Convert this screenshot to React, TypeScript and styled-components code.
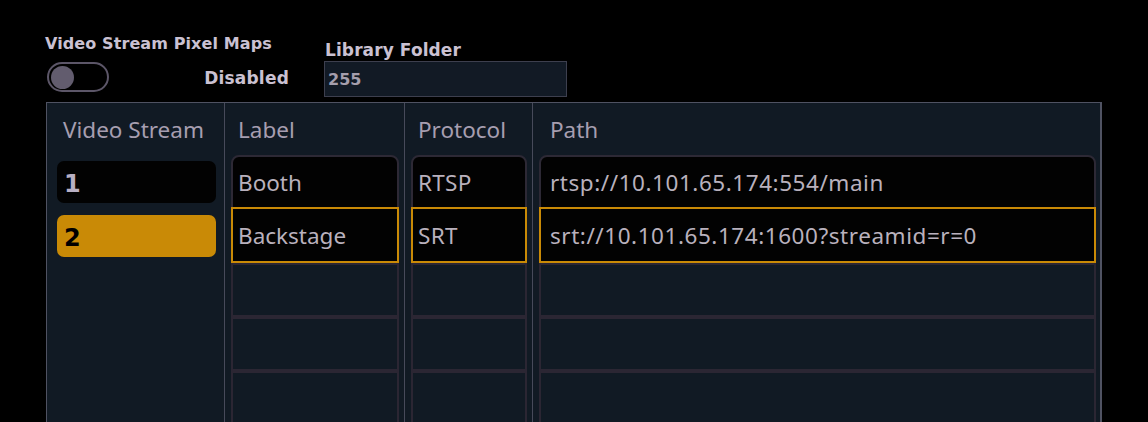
import React from "react";
import styled, { createGlobalStyle, css } from "styled-components";

const GlobalStyle = createGlobalStyle`
  html, body { margin: 0; padding: 0; background: #000; }
  body { font-family: "Noto Sans", "Open Sans", sans-serif; overflow: hidden; }
`;

const Page = styled.div`
  padding: 34px 0 0 46px;
  width: 1148px;
  height: 422px;
  box-sizing: border-box;
  overflow: hidden;
`;

const TopBar = styled.div`
  display: flex;
  align-items: flex-start;
`;

const ToggleGroup = styled.div`
  display: flex;
  flex-direction: column;
  width: 243px;
`;

const BoldLabel = styled.div<{ $size: number }>`
  font-family: "DejaVu Sans", sans-serif;
  font-weight: 700;
  font-size: ${(p) => p.$size}px;
  line-height: 19px;
  color: #cac1d2;
  white-space: nowrap;
`;

const Title = styled(BoldLabel)`
  margin-left: -1px;
  margin-bottom: 9px;
  letter-spacing: 0.1px;
`;

const ToggleRow = styled.div`
  display: flex;
  align-items: center;
  justify-content: space-between;
  height: 30px;
`;

const Toggle = styled.div`
  width: 62px;
  height: 30px;
  box-sizing: border-box;
  margin-left: 1px;
  border: 2px solid #5c5668;
  border-radius: 15px;
  display: flex;
  align-items: center;
  padding-left: 2px;
`;

const Knob = styled.div`
  width: 23px;
  height: 23px;
  border-radius: 50%;
  background: #625c6e;
`;

const Status = styled(BoldLabel)`
  margin-top: 2px;
  letter-spacing: 0.2px;
`;

const FolderGroup = styled.div`
  display: flex;
  flex-direction: column;
  margin-left: 35px;
  margin-top: 6px;
`;

const FolderTitle = styled(BoldLabel)`
  line-height: 20px;
  margin-left: 1px;
  margin-bottom: 1px;
  letter-spacing: 0.1px;
`;

const FolderInput = styled.div`
  width: 243px;
  height: 36px;
  box-sizing: border-box;
  border: 1px solid #3d3f4e;
  background: #121a25;
  display: flex;
  align-items: center;
  padding-left: 3px;
  font-family: "DejaVu Sans", sans-serif;
  font-weight: 700;
  font-size: 16px;
  color: #a59eac;
`;

const Panel = styled.div`
  margin-top: 5px;
  width: 1056px;
  height: 340px;
  box-sizing: border-box;
  border-top: 1px solid #4f5262;
  border-left: 1px solid #4f5262;
  border-right: 2px solid #4f5262;
  background: #111a24;
  display: grid;
  grid-template-columns: 178px 180px 128px 567px;
`;

const Column = styled.div<{ $divider?: number; $pad: string }>`
  display: flex;
  flex-direction: column;
  box-sizing: border-box;
  border-right: ${(p) => (p.$divider ? `${p.$divider}px solid #474a5a` : "none")};
  padding: ${(p) => p.$pad};
`;

const Header = styled.div<{ $indent: number }>`
  height: 52px;
  display: flex;
  align-items: center;
  padding-left: ${(p) => p.$indent}px;
  font-size: 22.5px;
  color: #a69eb0;
  white-space: nowrap;
`;

const StreamButton = styled.div<{ $active?: boolean }>`
  height: 42px;
  margin: 6px 0;
  border-radius: 7px;
  box-sizing: border-box;
  display: flex;
  align-items: center;
  padding: 3px 0 0 7px;
  font-family: "DejaVu Sans", sans-serif;
  font-weight: 700;
  font-size: 24px;
  background: ${(p) => (p.$active ? "#c98a06" : "#020202")};
  color: ${(p) => (p.$active ? "#000" : "#b8b0c4")};
`;

const Cell = styled.div<{ $kind: "first" | "selected" | "empty"; $inset: number; $spacing: number }>`
  position: relative;
  height: 54px;
  box-sizing: border-box;
  display: flex;
  align-items: center;
  padding-left: ${(p) => p.$inset}px;
  font-size: 22.5px;
  letter-spacing: ${(p) => p.$spacing}px;
  color: #b9b1bd;
  white-space: nowrap;
  border: 2px solid #2b2633;
  ${(p) =>
    p.$kind === "first" &&
    css`
      background: #020202;
      border-color: #2d2935;
      border-radius: 8px 8px 0 0;
    `}
  ${(p) =>
    p.$kind === "selected" &&
    css`
      background: #020202;
      border-color: #c98a06;
      height: 56px;
      margin-top: -2px;
      z-index: 1;
    `}
  ${(p) =>
    p.$kind === "empty" &&
    css`
      background: transparent;
    `}
`;

type Col = {
  title: string;
  indent: number;
  inset: number;
  spacing: number;
  pad: string;
  values: string[];
  divider?: number;
};

const columns: Col[] = [
  { title: "Label", indent: 7, inset: 5, spacing: 0, pad: "0 5px 0 6px", values: ["Booth", "Backstage"], divider: 1 },
  { title: "Protocol", indent: 7, inset: 5, spacing: 0.3, pad: "0 5px 0 6px", values: ["RTSP", "SRT"], divider: 1 },
  {
    title: "Path",
    indent: 11,
    inset: 9,
    spacing: 0.55,
    pad: "0 4px 0 6px",
    values: ["rtsp://10.101.65.174:554/main", "srt://10.101.65.174:1600?streamid=r=0"],
  },
];

const EMPTY_ROWS = 3;

export default function App() {
  return (
    <>
      <GlobalStyle />
      <Page>
        <TopBar>
          <ToggleGroup>
            <Title $size={16}>Video Stream Pixel Maps</Title>
            <ToggleRow>
              <Toggle>
                <Knob />
              </Toggle>
              <Status $size={17}>Disabled</Status>
            </ToggleRow>
          </ToggleGroup>
          <FolderGroup>
            <FolderTitle $size={17}>Library Folder</FolderTitle>
            <FolderInput>255</FolderInput>
          </FolderGroup>
        </TopBar>
        <Panel>
          <Column $divider={1} $pad="0 8px 0 10px">
            <Header $indent={6}>Video Stream</Header>
            <StreamButton>1</StreamButton>
            <StreamButton $active>2</StreamButton>
          </Column>
          {columns.map((c) => (
            <Column key={c.title} $divider={c.divider} $pad={c.pad}>
              <Header $indent={c.indent}>{c.title}</Header>
              <Cell $kind="first" $inset={c.inset} $spacing={c.spacing}>{c.values[0]}</Cell>
              <Cell $kind="selected" $inset={c.inset} $spacing={c.spacing}>{c.values[1]}</Cell>
              {Array.from({ length: EMPTY_ROWS }).map((_, i) => (
                <Cell key={i} $kind="empty" $inset={c.inset} $spacing={0} />
              ))}
            </Column>
          ))}
        </Panel>
      </Page>
    </>
  );
}
